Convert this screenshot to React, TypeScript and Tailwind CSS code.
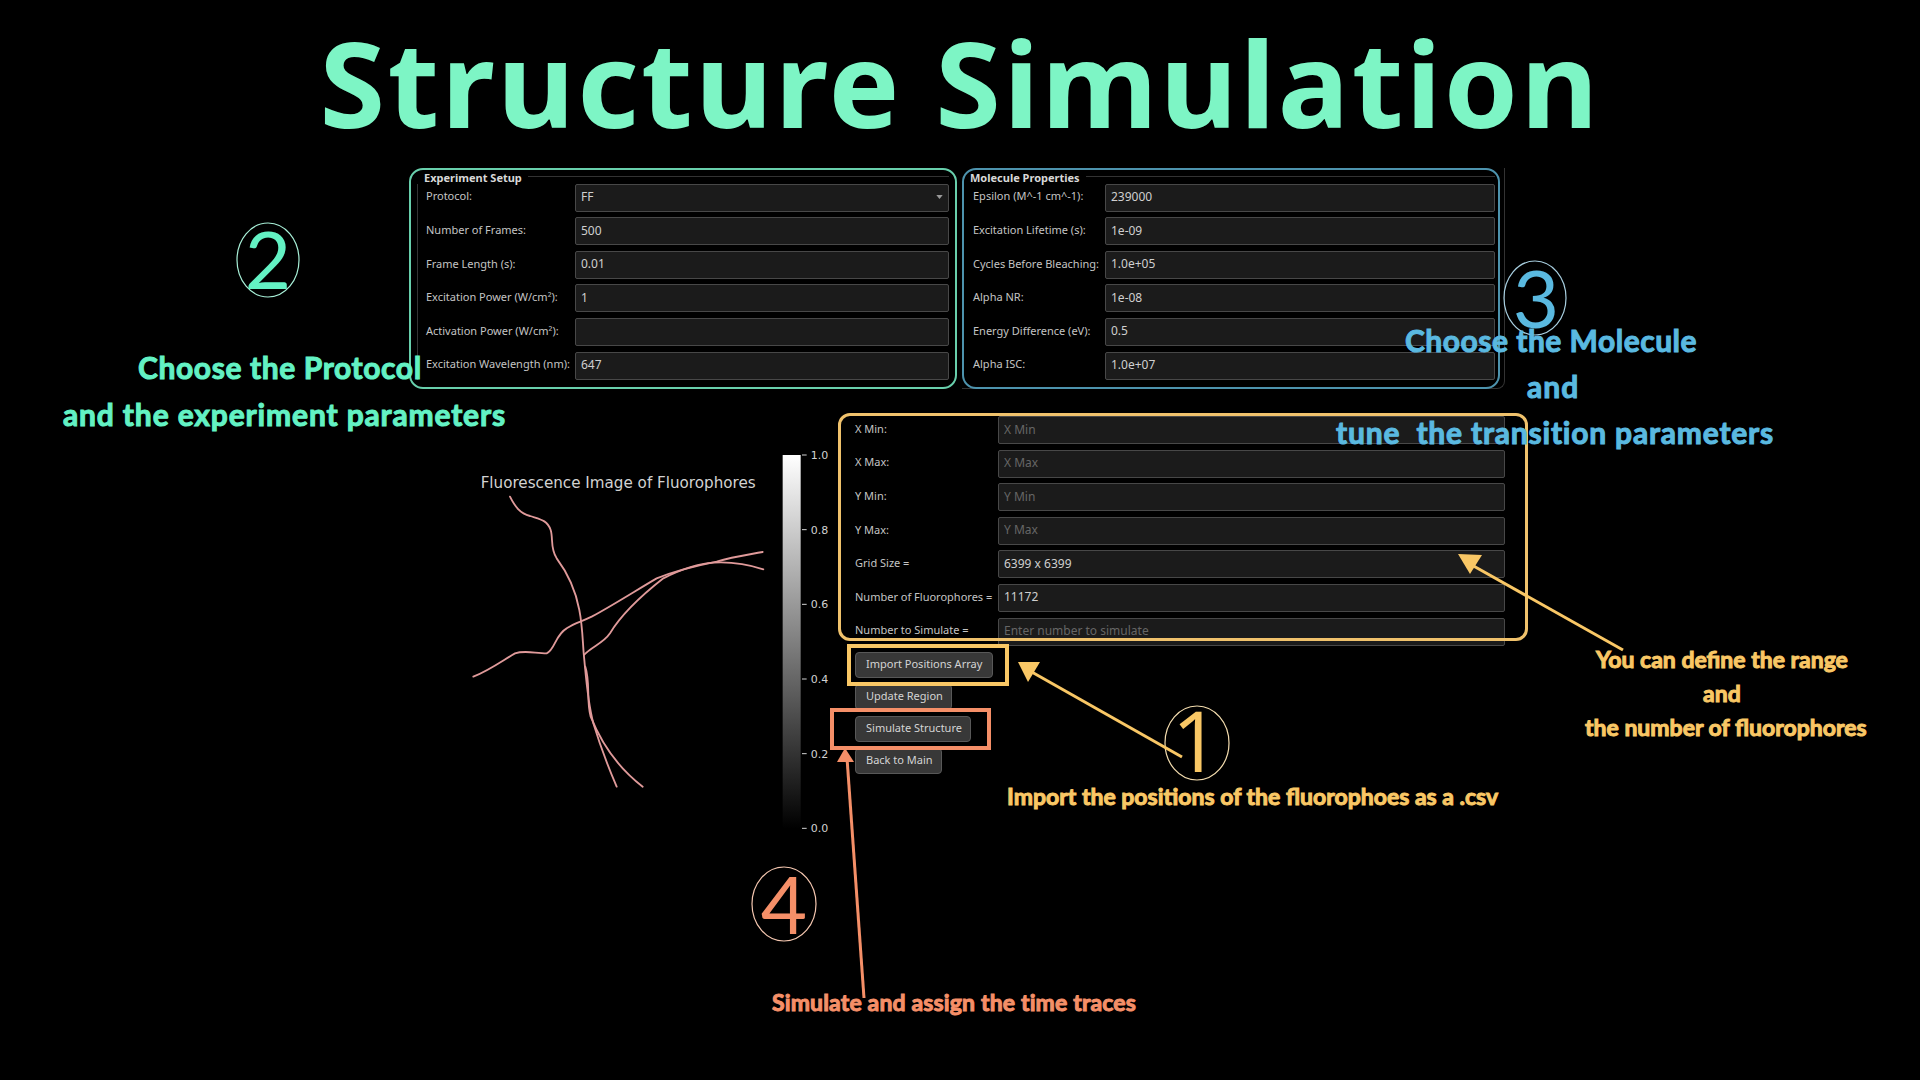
// App.tsx
import React from 'react';

const experimentRows = [
  { label: 'Number of Frames:', value: '500' },
  { label: 'Frame Length (s):', value: '0.01' },
  { label: 'Excitation Power (W/cm²):', value: '1' },
  { label: 'Activation Power (W/cm²):', value: '' },
  { label: 'Excitation Wavelength (nm):', value: '647' },
];

const moleculeRows = [
  { label: 'Epsilon (M^-1 cm^-1):', value: '239000' },
  { label: 'Excitation Lifetime (s):', value: '1e-09' },
  { label: 'Cycles Before Bleaching:', value: '1.0e+05' },
  { label: 'Alpha NR:', value: '1e-08' },
  { label: 'Energy Difference (eV):', value: '0.5' },
  { label: 'Alpha ISC:', value: '1.0e+07' },
];

const regionRows = [
  { label: 'X Min:', value: '', placeholder: 'X Min' },
  { label: 'X Max:', value: '', placeholder: 'X Max' },
  { label: 'Y Min:', value: '', placeholder: 'Y Min' },
  { label: 'Y Max:', value: '', placeholder: 'Y Max' },
  { label: 'Grid Size =', value: '6399 x 6399', placeholder: '' },
  { label: 'Number of Fluorophores =', value: '11172', placeholder: '' },
  { label: 'Number to Simulate =', value: '', placeholder: 'Enter number to simulate' },
];

const ticks = [
  { label: '1.0', y: 45 },
  { label: '0.8', y: 269 },
  { label: '0.6', y: 493 },
  { label: '0.4', y: 717 },
  { label: '0.2', y: 941 },
  { label: '0.0', y: 1165 },
];

function Field({ value, placeholder }: { value?: string; placeholder?: string }) {
  return (
    <input
      readOnly
      value={value}
      placeholder={placeholder}
      className="h-[28px] min-w-0 flex-1 rounded-[2px] border border-[#484848] bg-[#1b1b1b] pb-[2px] pl-[5px] pr-[6px] text-[12px] text-[#cfcfcf] outline-none placeholder:text-[#666666]"
    />
  );
}

function Row({ label, labelWidth, children }: { label: string; labelWidth: string; children: React.ReactNode }) {
  return (
    <div className="flex items-center">
      <label className={`${labelWidth} shrink-0 whitespace-nowrap pb-[2px] text-[11px] text-[#c4c4c4]`}>{label}</label>
      {children}
    </div>
  );
}

function Legend({ title }: { title: string }) {
  return (
    <div className="flex h-[13.6px] items-end gap-[6px]">
      <span className="whitespace-nowrap text-[11px] leading-[13px] font-bold text-[#d8d8d8]">{title}</span>
      <span className="mb-[7px] h-px flex-1 bg-[#333333]" />
    </div>
  );
}

function ToolButton({ children, className = 'pl-[10px] pr-[8px]' }: { children: React.ReactNode; className?: string }) {
  return (
    <button className={`${className} block h-[26px] rounded-[4px] border border-[#585858] bg-[#383838] text-[11px] whitespace-nowrap text-[#d4d4d4]`}>
      {children}
    </button>
  );
}

function FluorescencePlot() {
  return (
    <svg viewBox="0 0 1185 1200" className="mt-[24px] h-[400px] w-[395px] shrink-0">
      <defs>
        <linearGradient id="cbar" x1="0" y1="0" x2="0" y2="1">
          <stop offset="0" stopColor="#ffffff" />
          <stop offset="1" stopColor="#000000" />
        </linearGradient>
      </defs>
      <text x="62" y="144" fontFamily="DejaVu Sans" fontSize="45.5" fill="#d2d2d2">
        Fluorescence Image of Fluorophores
      </text>
      <g fill="none" stroke="#e09a9a" strokeWidth="5.5" strokeLinecap="round">
        <path d="M150 170 C165 200 180 220 210 228 C240 238 262 240 272 270 C280 295 270 325 290 355 C320 395 345 440 358 510 C368 560 368 610 372 650 C378 710 382 780 400 850 C415 900 440 970 470 1040" />
        <path d="M376 680 C392 730 378 780 392 830 C420 900 470 980 548 1040" />
        <path d="M40 710 C90 690 130 660 165 640 C195 630 225 640 260 640 C285 630 285 585 320 565 C345 548 365 545 395 530 C460 495 530 450 590 415 C640 395 720 375 770 365 C820 350 860 345 908 336" />
        <path d="M372 645 C395 620 430 610 450 580 C480 530 540 470 610 415 C660 390 720 370 760 368 C810 365 860 372 910 388" />
      </g>
      <rect x="968" y="45" width="54" height="1120" fill="url(#cbar)" />
      {ticks.map((t) => (
        <g key={t.label}>
          <line x1="1026" x2="1040" y1={t.y} y2={t.y} stroke="#d2d2d2" strokeWidth="3" />
          <text x="1052" y={t.y + 12} fontFamily="DejaVu Sans" fontSize="33" fill="#d2d2d2">
            {t.label}
          </text>
        </g>
      ))}
    </svg>
  );
}

function Overlay() {
  return (
    <svg viewBox="0 0 1920 1080" className="pointer-events-none absolute inset-0 h-[1080px] w-[1920px]">
      <g fill="none" strokeWidth="1.2">
        <ellipse cx="268" cy="260" rx="31" ry="37" stroke="#a8f0d8" />
        <ellipse cx="1535" cy="298" rx="31" ry="37" stroke="#a8cfe0" />
        <ellipse cx="1197" cy="743" rx="32" ry="37" stroke="#f3dcae" />
        <ellipse cx="784" cy="904" rx="32" ry="37" stroke="#f5c7b0" />
      </g>
      <g fontFamily="Lato" fontSize="80" textAnchor="middle">
        <text x="268" y="289" fill="#63f2c4">2</text>
        <text x="1536" y="328" fill="#5ab9e0">3</text>
        <text x="784" y="934" fill="#f58f68">4</text>
      </g>
      <text x="1196" y="772" fontFamily="Open Sans" fontSize="84" textAnchor="middle" fill="#f9c765">1</text>
      <g strokeWidth="3" fill="none">
        <line x1="1182" y1="757" x2="1030" y2="671" stroke="#f9c765" />
        <line x1="1623" y1="650" x2="1470" y2="564" stroke="#f9c765" />
        <line x1="864" y1="998" x2="847" y2="758" stroke="#f58f68" />
      </g>
      <polygon points="1018,662 1040,662 1028,682" fill="#f9c765" />
      <polygon points="1458,554 1482,555 1470,574" fill="#f9c765" />
      <polygon points="845,748 837,762 854,762" fill="#f58f68" />
    </svg>
  );
}

export default function App() {
  const note = "pointer-events-none absolute whitespace-nowrap font-['Lato',sans-serif] font-bold leading-none [-webkit-text-stroke:1px_currentColor]";

  return (
    <div className="relative h-[1080px] w-[1920px] overflow-hidden bg-black font-['Noto_Sans',sans-serif]">
      <h1 className="flex h-[168px] items-center justify-center pb-[4px] text-[119px] font-bold leading-none tracking-[2.5px] text-[#7df5c5]">
        Structure Simulation
      </h1>

      <div className="flex gap-[5px] pl-[409px]">
        {/* Experiment Setup */}
        <section className="relative h-[221px] w-[548px] rounded-[14px] border-2 border-[#68cfac] pl-[6px] pr-[6px]">
          <div className="pl-[7px]">
            <Legend title="Experiment Setup" />
          </div>
          <div className="flex flex-col gap-[5.6px] border-l border-[#333333] pl-[8px]">
            <Row label="Protocol:" labelWidth="w-[149px]">
              <div className="flex h-[28px] flex-1 items-center justify-between rounded-[2px] border border-[#484848] bg-[#1b1b1b] pb-[2px] pl-[5px] pr-[5px] text-[12px] text-[#cfcfcf]">
                <span>FF</span>
                <svg viewBox="0 0 8 5" className="h-[4px] w-[7px]">
                  <polygon points="0,0 8,0 4,5" fill="#9a9a9a" />
                </svg>
              </div>
            </Row>
            {experimentRows.map((r) => (
              <Row key={r.label} label={r.label} labelWidth="w-[149px]">
                <Field value={r.value} />
              </Row>
            ))}
          </div>
        </section>

        {/* Molecule Properties */}
        <section className="relative h-[221px] w-[543px] rounded-br-[8px] border-r border-b border-[#333333] pl-[11px] pr-[9px] pt-[2px]">
          <div className="-ml-[3px]">
            <Legend title="Molecule Properties" />
          </div>
          <div className="flex flex-col gap-[5.6px]">
            {moleculeRows.map((r) => (
              <Row key={r.label} label={r.label} labelWidth="w-[132px]">
                <Field value={r.value} />
              </Row>
            ))}
          </div>
          <div className="pointer-events-none absolute bottom-[-1px] left-0 right-[4px] top-0 rounded-[14px] border-2 border-[#4d93ad]" />
        </section>
      </div>

      <div className="mt-[27px] flex pl-[460px]">
        <FluorescencePlot />

        <div className="relative w-[650px]">
          <div className="flex flex-col gap-[5.6px]">
            {regionRows.map((r) => (
              <Row key={r.label} label={r.label} labelWidth="w-[143px]">
                <Field value={r.value} placeholder={r.placeholder} />
              </Row>
            ))}
          </div>
          <div className="pointer-events-none absolute left-[-17px] top-[-3px] h-[228px] w-[690px] rounded-[12px] border-[3px] border-[#f0c26c]" />

          <div className="mt-[6px] flex flex-col items-start gap-[6px]">
            <div className="relative">
              <ToolButton className="px-[10px]">Import Positions Array</ToolButton>
              <div className="pointer-events-none absolute -left-[8px] -top-[8px] h-[42px] w-[162px] border-[4px] border-[#f9c765]" />
            </div>
            <ToolButton>Update Region</ToolButton>
            <div className="relative">
              <ToolButton>Simulate Structure</ToolButton>
              <div className="pointer-events-none absolute -left-[25px] -top-[8px] h-[42px] w-[161px] border-[4px] border-[#f58f68]" />
            </div>
            <ToolButton>Back to Main</ToolButton>
          </div>
        </div>
      </div>

      <Overlay />

      <span className={`${note} left-[138px] top-[352px] text-[30px] tracking-[0.6px] text-[#63f2c4]`}>Choose the Protocol</span>
      <span className={`${note} left-[63px] top-[399px] text-[30px] tracking-[0.85px] text-[#63f2c4]`}>and the experiment parameters</span>
      <span className={`${note} left-[1405px] top-[325px] text-[30px] tracking-[0.5px] text-[#5ab9e0]`}>Choose the Molecule</span>
      <span className={`${note} left-[1527px] top-[371px] text-[30px] tracking-[1px] text-[#5ab9e0]`}>and</span>
      <span className={`${note} left-[1336px] top-[417px] text-[30px] tracking-[0.8px] text-[#5ab9e0]`}>tune&nbsp; the transition parameters</span>
      <span className={`${note} left-[1596px] top-[648px] text-[23px] text-[#f9c765]`}>You can define the range</span>
      <span className={`${note} left-[1703px] top-[682px] text-[23px] text-[#f9c765]`}>and</span>
      <span className={`${note} left-[1585px] top-[716px] text-[23px] text-[#f9c765]`}>the number of fluorophores</span>
      <span className={`${note} left-[1007px] top-[785px] text-[23px] text-[#f9c765]`}>Import the positions of the fluorophoes as a .csv</span>
      <span className={`${note} left-[772px] top-[991px] text-[23px] tracking-[0.15px] text-[#f58f68]`}>Simulate and assign the time traces</span>
    </div>
  );
}
